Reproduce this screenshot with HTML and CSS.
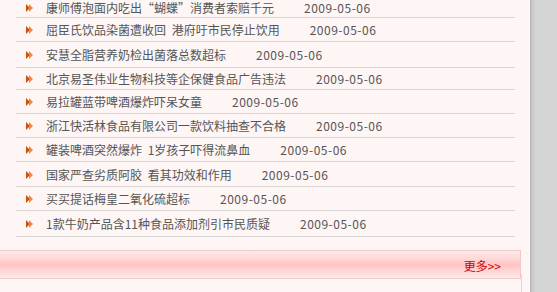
FILE: index.html
```html
<!DOCTYPE html>
<html lang="zh-CN">
<head>
  <meta charset="UTF-8" />
  <title>食品安全新闻</title>
  <link rel="stylesheet" href="styles.css">
</head>
<body>
  <div class="page">
    <div class="main">
      <ul class="news">
        <li class="first"><span class="arrow"></span><a href="#">康师傅泡面内吃出“蝴蝶”消费者索赔千元</a><span class="date">2009-05-06</span></li>
        <li><span class="arrow"></span><a href="#">屈臣氏饮品染菌遭收回 港府吁市民停止饮用</a><span class="date">2009-05-06</span></li>
        <li class="tall"><span class="arrow"></span><a href="#">安慧全脂营养奶检出菌落总数超标</a><span class="date">2009-05-06</span></li>
        <li class="short"><span class="arrow"></span><a href="#">北京易圣伟业生物科技等企保健食品广告违法</a><span class="date">2009-05-06</span></li>
        <li><span class="arrow"></span><a href="#">易拉罐蓝带啤酒爆炸吓呆女童</a><span class="date">2009-05-06</span></li>
        <li><span class="arrow"></span><a href="#">浙江快活林食品有限公司一款饮料抽查不合格</a><span class="date">2009-05-06</span></li>
        <li><span class="arrow"></span><a href="#">罐装啤酒突然爆炸 1岁孩子吓得流鼻血</a><span class="date">2009-05-06</span></li>
        <li class="mid"><span class="arrow"></span><a href="#">国家严查劣质阿胶 看其功效和作用</a><span class="date">2009-05-06</span></li>
        <li><span class="arrow"></span><a href="#">买买提话梅皇二氧化硫超标</a><span class="date">2009-05-06</span></li>
        <li class="tall"><span class="arrow"></span><a href="#">1款牛奶产品含11种食品添加剂引市民质疑</a><span class="date">2009-05-06</span></li>
      </ul>

      <div class="more-bar">
        <a href="#" class="more">更多&gt;&gt;</a>
      </div>
      <div class="next-box"></div>
    </div>
    <div class="side"></div>
  </div>
</body>
</html>
```

FILE: styles.css
```css
body, html {
  margin: 0;
  padding: 0;
  height: 100%;
  overflow: hidden;
  font-family: "Noto Sans CJK SC", "DejaVu Sans", sans-serif;
  font-size: 12px;
  color: #555;
}

.page {
  display: flex;
  height: 100%;
}

.main {
  width: 530px;
  background: #fdf6f5;
}

.side {
  flex: 1;
  background: linear-gradient(to right, #b4b4b4 0, #c8c8c8 2px, #d5d5d5 5px, #d5d5d5 100%);
}

/* news list */
.news {
  list-style: none;
  margin: -4px 0 0 16px;
  padding: 0;
  width: 499px;
}

.news li {
  display: flex;
  align-items: center;
  height: 23px;
  border-bottom: 1px solid #d9d6d6;
  white-space: nowrap;
}

.news li.first { height: 19px; padding-top: 2px; }
.news li.tall { height: 25px; }
.news li.short { height: 21px; }
.news li.mid { height: 24px; }

.news li.first a,
.news li.first .date { padding-top: 0; }

.news a {
  color: #555;
  text-decoration: none;
  line-height: 12px;
  padding-top: 1px;
  word-spacing: 3px;
}

.arrow {
  width: 8px;
  height: 8px;
  margin: 1px 12px 0 10px;
  flex: none;
  position: relative;
}

.arrow::before,
.arrow::after {
  content: "";
  position: absolute;
  top: 0;
  width: 0;
  height: 0;
  border-top: 4px solid transparent;
  border-bottom: 4px solid transparent;
}

.arrow::before {
  left: 0;
  border-left: 4px solid #cf4f0a;
}

.arrow::after {
  left: 3px;
  border-left: 4px solid #e9884a;
}

.date {
  margin-left: 30px;
  color: #555;
  line-height: 12px;
  padding-top: 1px;
  letter-spacing: 0.5px;
}

/* more bar */
.more-bar {
  margin-top: 13px;
  width: 520px;
  height: 27px;
  border: 1px solid #f1c9c9;
  border-left: none;
  background: linear-gradient(to bottom, #fdeaea 0%, #ffd6d6 30%, #ffc3c3 50%, #ffd4d4 72%, #fde8e8 100%);
  display: flex;
  align-items: center;
  justify-content: flex-end;
  position: relative;
  z-index: 1;
}

.more {
  color: #d00000;
  text-decoration: none;
  margin-right: 19px;
  padding-top: 1px;
}

.next-box {
  margin-top: -5px;
  width: 522px;
  height: 18px;
  border-right: 1px solid #f1d0d0;
  border-top: 1px solid #f1d0d0;
  box-sizing: border-box;
}
```
